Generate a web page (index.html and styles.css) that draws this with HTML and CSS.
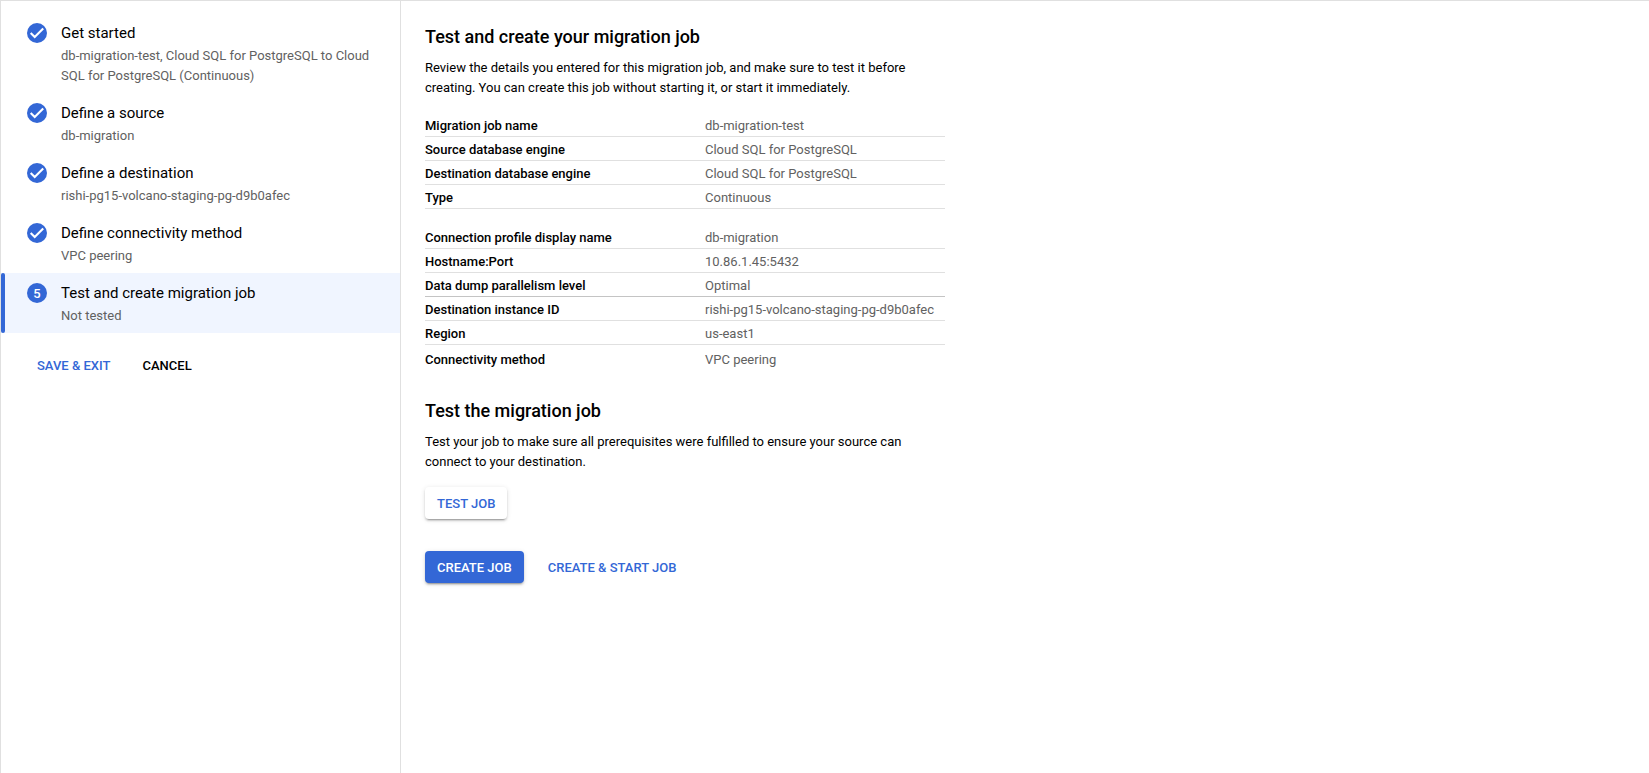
FILE: index.html
```html
<!DOCTYPE html>
<html lang="en">
<head>
<meta charset="utf-8">
<title>Create a migration job</title>
<link rel="stylesheet" href="styles.css">
</head>
<body>
<svg class="sprite" aria-hidden="true">
  <symbol id="done" viewBox="0 0 20 20">
    <circle cx="10" cy="10" r="10" fill="#3367d6"/>
    <path d="M3.7 9.9 7.7 13.9 16.2 5.4" fill="none" stroke="#fff" stroke-width="2.1"/>
  </symbol>
</svg>
<div class="layout">
  <aside class="sidebar">
    <ol class="steps">
      <li class="step">
        <svg class="step-icon"><use href="#done"/></svg>
        <div class="step-text"><div class="step-title">Get started</div><div class="step-note">db-migration-test, Cloud SQL for PostgreSQL to Cloud SQL for PostgreSQL (Continuous)</div></div>
      </li>
      <li class="step">
        <svg class="step-icon"><use href="#done"/></svg>
        <div class="step-text"><div class="step-title">Define a source</div><div class="step-note">db-migration</div></div>
      </li>
      <li class="step">
        <svg class="step-icon"><use href="#done"/></svg>
        <div class="step-text"><div class="step-title">Define a destination</div><div class="step-note">rishi-pg15-volcano-staging-pg-d9b0afec</div></div>
      </li>
      <li class="step">
        <svg class="step-icon"><use href="#done"/></svg>
        <div class="step-text"><div class="step-title">Define connectivity method</div><div class="step-note">VPC peering</div></div>
      </li>
      <li class="step step-active" aria-current="step">
        <span class="step-icon step-number">5</span>
        <div class="step-text"><div class="step-title">Test and create migration job</div><div class="step-note">Not tested</div></div>
      </li>
    </ol>
    <div class="sidebar-actions">
      <button type="button" class="button">SAVE &amp; EXIT</button>
      <button type="button" class="button button-plain">CANCEL</button>
    </div>
  </aside>
  <main class="content">
    <section>
      <h1 class="heading">Test and create your migration job</h1>
      <p class="text">Review the details you entered for this migration job, and make sure to test it before creating. You can create this job without starting it, or start it immediately.</p>
      <table class="details">
        <tr><th scope="row">Migration job name</th><td>db-migration-test</td></tr>
        <tr><th scope="row">Source database engine</th><td>Cloud SQL for PostgreSQL</td></tr>
        <tr><th scope="row">Destination database engine</th><td>Cloud SQL for PostgreSQL</td></tr>
        <tr><th scope="row">Type</th><td>Continuous</td></tr>
      </table>
      <table class="details">
        <tr><th scope="row">Connection profile display name</th><td>db-migration</td></tr>
        <tr><th scope="row">Hostname:Port</th><td>10.86.1.45:5432</td></tr>
        <tr class="group-end"><th scope="row">Data dump parallelism level</th><td>Optimal</td></tr>
        <tr><th scope="row">Destination instance ID</th><td>rishi-pg15-volcano-staging-pg-d9b0afec</td></tr>
        <tr><th scope="row">Region</th><td>us-east1</td></tr>
        <tr class="unruled"><th scope="row">Connectivity method</th><td>VPC peering</td></tr>
      </table>
    </section>
    <section class="test">
      <h2 class="heading">Test the migration job</h2>
      <p class="text">Test your job to make sure all prerequisites were fulfilled to ensure your source can connect to your destination.</p>
      <button type="button" class="button button-raised">TEST JOB</button>
    </section>
    <div class="actions">
      <button type="button" class="button button-raised button-primary">CREATE JOB</button>
      <button type="button" class="button">CREATE &amp; START JOB</button>
    </div>
  </main>
</div>
</body>
</html>
```
FILE: styles.css
```css
* {
  box-sizing: border-box;
}

body {
  margin: 0;
  background: #fff;
  color: #000;
  font: 400 13px/20px Roboto, sans-serif;
}

.sprite {
  display: none;
}

.layout {
  display: flex;
  min-height: 100vh;
  border: solid #e0e0e0;
  border-width: 1px 0 0 1px;
}

.sidebar {
  flex: 0 0 400px;
  padding-top: 12px;
  border-right: 1px solid #e0e0e0;
}

.steps {
  margin: 0;
  padding: 0;
  list-style: none;
}

.step {
  display: flex;
  gap: 14px;
  padding: 10px 24px 7px 22px;
  border-left: 4px solid transparent;
}

.step-active {
  position: relative;
  background: #f0f5ff;
}

.step-active::before {
  content: "";
  position: absolute;
  top: 0;
  bottom: 0;
  left: -4px;
  width: 4px;
  border-radius: 2px;
  background: #3367d6;
}

.step-icon {
  flex: none;
  width: 20px;
  height: 20px;
}

.step-number {
  border-radius: 50%;
  background: #3367d6;
  color: #fff;
  font-size: 13px;
  font-weight: 500;
  line-height: 21px;
  text-align: center;
}

.step-title {
  margin-bottom: 3px;
  font-size: 15px;
}

.step-note {
  color: #616161;
}

.sidebar-actions {
  display: flex;
  gap: 8px;
  padding: 16px 24px;
}

.button {
  height: 32px;
  padding: 2px 12px 0;
  border: 0;
  border-radius: 4px;
  background: transparent;
  color: #3367d6;
  font: 500 13px/30px Roboto, sans-serif;
  cursor: pointer;
}

.button-plain {
  color: #000;
}

.button-raised {
  background: #fff;
  box-shadow: 0 3px 1px -2px rgba(0, 0, 0, 0.2), 0 2px 2px rgba(0, 0, 0, 0.14), 0 1px 5px rgba(0, 0, 0, 0.12);
}

.button-primary {
  background: #3367d6;
  color: #fff;
}

.content {
  flex: 1;
  max-width: 568px;
  padding: 24px;
}

.heading {
  margin: 0 0 9px;
  font-size: 18px;
  font-weight: 500;
  line-height: 24px;
}

.text {
  margin: 0 0 15px;
  max-width: 500px;
}

.details {
  width: 100%;
  table-layout: fixed;
  border-spacing: 0;
}

.details + .details {
  margin-top: 16px;
}

.details th,
.details td {
  padding: 3px 0 0;
  border-bottom: 1px solid #e0e0e0;
  text-align: left;
}

.details th {
  width: 280px;
  font-weight: 500;
}

.details td {
  color: #616161;
}

.details .group-end > * {
  border-bottom-color: #c4c4c4;
}

.details .unruled > * {
  padding-top: 5px;
  border-bottom: 0;
}

.test {
  margin: 29px 0 32px;
}

.actions {
  display: flex;
  gap: 12px;
}
```
